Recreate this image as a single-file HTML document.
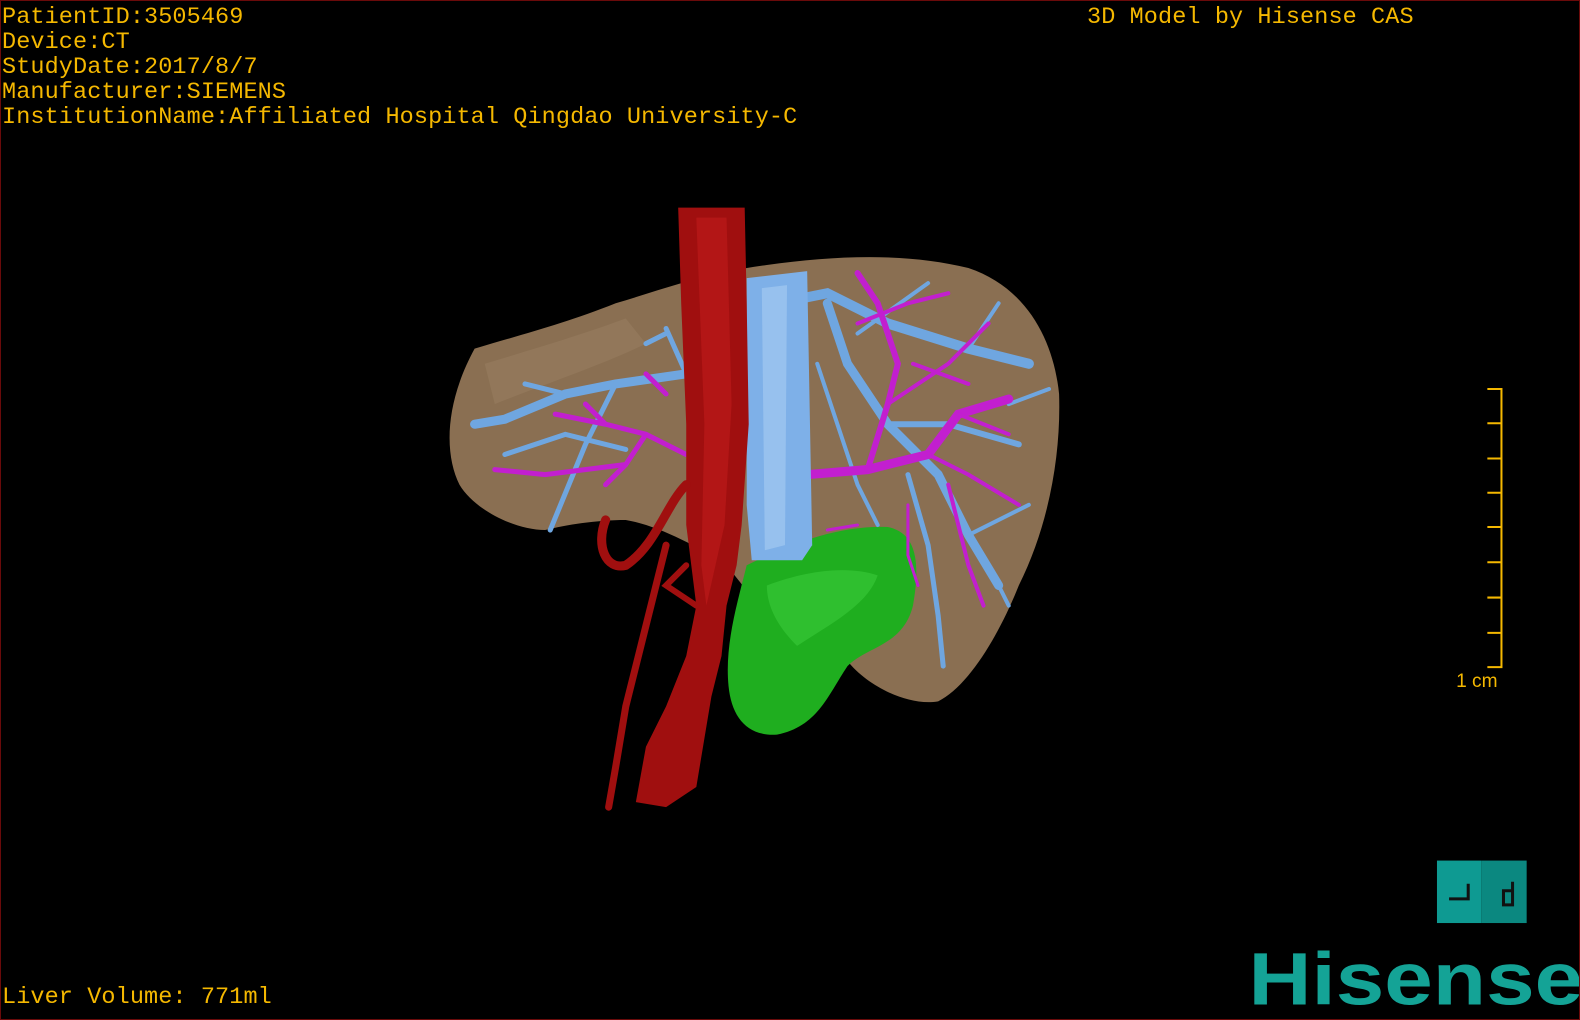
<!DOCTYPE html>
<html><head><style>
html,body{margin:0;padding:0;background:#000;}
#c{position:relative;width:1578px;height:1018px;border:1px solid #6a0a0a;overflow:hidden;background:#000;}
.t{position:absolute;font-family:"Liberation Mono",monospace;font-size:23.5px;color:#f5b800;white-space:pre;line-height:25px;letter-spacing:0.1px;}
</style></head><body><div id="c">
<svg width="1578" height="1018" style="position:absolute;left:0;top:0">
<g transform="scale(1.0077)">
<path d="M470,345 C520,330 560,320 610,300 C660,285 700,270 760,262 C830,252 900,250 960,265 C1020,285 1045,340 1050,390 C1052,450 1040,520 1010,580 C990,630 960,680 930,695 C900,700 860,680 840,655 C820,640 790,640 760,610 L720,560 C690,540 650,520 620,515 C590,515 560,520 540,525 C510,525 470,505 455,480 C440,450 440,400 470,345 Z" fill="#8a6f52"/>
<path d="M480,360 C530,345 580,330 620,315 L640,340 C600,360 540,380 490,400 Z" fill="#9a7f62" opacity=".5"/>
<path d="M740,560 C780,540 830,520 880,522 C910,528 912,560 905,600 C895,640 860,640 840,660 C820,690 810,720 770,728 C740,730 725,710 722,680 C718,640 730,600 740,560 Z" fill="#1fae1f"/>
<path d="M760,580 C800,565 840,560 870,570 C860,600 820,620 790,640 C770,620 760,600 760,580 Z" fill="#3fd03f" opacity=".5"/>
<g stroke="#6fa6e0" fill="none" stroke-linecap="round">
<path d="M770,300 L820,290 L880,320 L960,345 L1020,360" stroke-width="10"/>
<path d="M820,300 L840,360 L880,420 L930,470 L960,530 L990,580" stroke-width="9"/>
<path d="M880,420 L940,420 L1010,440" stroke-width="6"/>
<path d="M900,470 L920,540 L930,610 L935,660" stroke-width="5"/>
<path d="M960,345 L990,300 M1000,400 L1040,385 M960,530 L1020,500 M990,580 L1000,600 M850,330 L920,280" stroke-width="4"/>
<path d="M740,350 L680,370 L610,380 L560,390 L500,415 L470,420" stroke-width="9"/>
<path d="M610,380 L580,440 L545,525 M560,390 L520,380 M640,340 L660,330 M500,450 L560,430 L620,445 M680,370 L660,325" stroke-width="5"/>
<path d="M810,360 L830,420 L850,480 L870,520 M800,420 L760,440" stroke-width="4"/>
</g>
<g stroke="#c21fcf" fill="none" stroke-linecap="round">
<path d="M800,470 L860,465 L920,450 L950,410 L1000,395" stroke-width="9"/>
<path d="M860,465 L880,400 L890,360 L870,300 L850,270" stroke-width="6"/>
<path d="M920,450 L960,470 L1010,500 M880,400 L940,360 L980,320 M950,410 L1000,430 M905,360 L960,380 M940,480 L960,560 L975,600 M850,320 L900,300 L940,290" stroke-width="4"/>
<path d="M680,450 L640,430 L600,420 L550,410 M640,430 L620,460 L540,470 L490,465 M600,420 L580,400 M660,390 L640,370 M620,460 L600,480" stroke-width="5"/>
<path d="M850,520 L820,525 M900,500 L900,550 L910,580" stroke-width="3"/>
</g>
<path d="M740,275 L800,268 L805,540 L795,555 L745,555 L740,500 Z" fill="#7eb0e8"/>
<path d="M755,285 L780,282 L778,540 L758,545 Z" fill="#a8cdf2" opacity=".6"/>
<path d="M672,205 L738,205 L740,300 L742,420 L735,520 L730,560 L720,600 L715,650 L705,690 L700,720 L690,780 L660,800 L630,795 L640,740 L660,700 L680,650 L690,600 L685,560 L680,520 L680,420 L675,300 Z" fill="#a00f0f"/>
<path d="M690,215 L720,215 L725,400 L718,520 L700,600 L695,560 L698,420 Z" fill="#c01b1b" opacity=".6"/>
<g stroke="#a00f0f" fill="none" stroke-linecap="round">
<path d="M680,480 C660,500 650,540 620,560 C600,565 590,540 600,515" stroke-width="9"/>
<path d="M660,540 L640,620 L620,700 L610,760 L603,800" stroke-width="7"/>
<path d="M680,560 L660,580 L690,600" stroke-width="6"/>
</g>
<g stroke="#f5b800" stroke-width="2" fill="none">
<path d="M1475,385 H1489 V661 H1475"/>
<path d="M1475,419 H1489 M1475,454 H1489 M1475,488 H1489 M1475,522 H1489 M1475,557 H1489 M1475,592 H1489 M1475,627 H1489"/>
</g>
<text x="1444" y="681" font-family="Liberation Sans,sans-serif" font-size="19" fill="#f5b800">1 cm</text>
<rect x="1425" y="853" width="44" height="62" fill="#0e9a92"/>
<rect x="1469" y="853" width="45" height="62" fill="#0b8880"/>
<path d="M1437,891 H1456 V876" stroke="#111" stroke-width="3" fill="none"/>
<path d="M1500,874 V897 H1491 V883 H1500" stroke="#111" stroke-width="3" fill="none"/>
<text x="1238" y="996" font-family="Liberation Sans,sans-serif" font-weight="bold" font-size="74" fill="#14a396" textLength="332" lengthAdjust="spacingAndGlyphs">Hisense</text>
</g>
</svg>
<div class="t" style="left:1px;top:4px">PatientID:3505469
Device:CT
StudyDate:2017/8/7
Manufacturer:SIEMENS
InstitutionName:Affiliated Hospital Qingdao University-C</div>
<div class="t" style="left:1086px;top:4px">3D Model by Hisense CAS</div>
<div class="t" style="left:1px;top:984px">Liver Volume: 771ml</div>
</div></body></html>
